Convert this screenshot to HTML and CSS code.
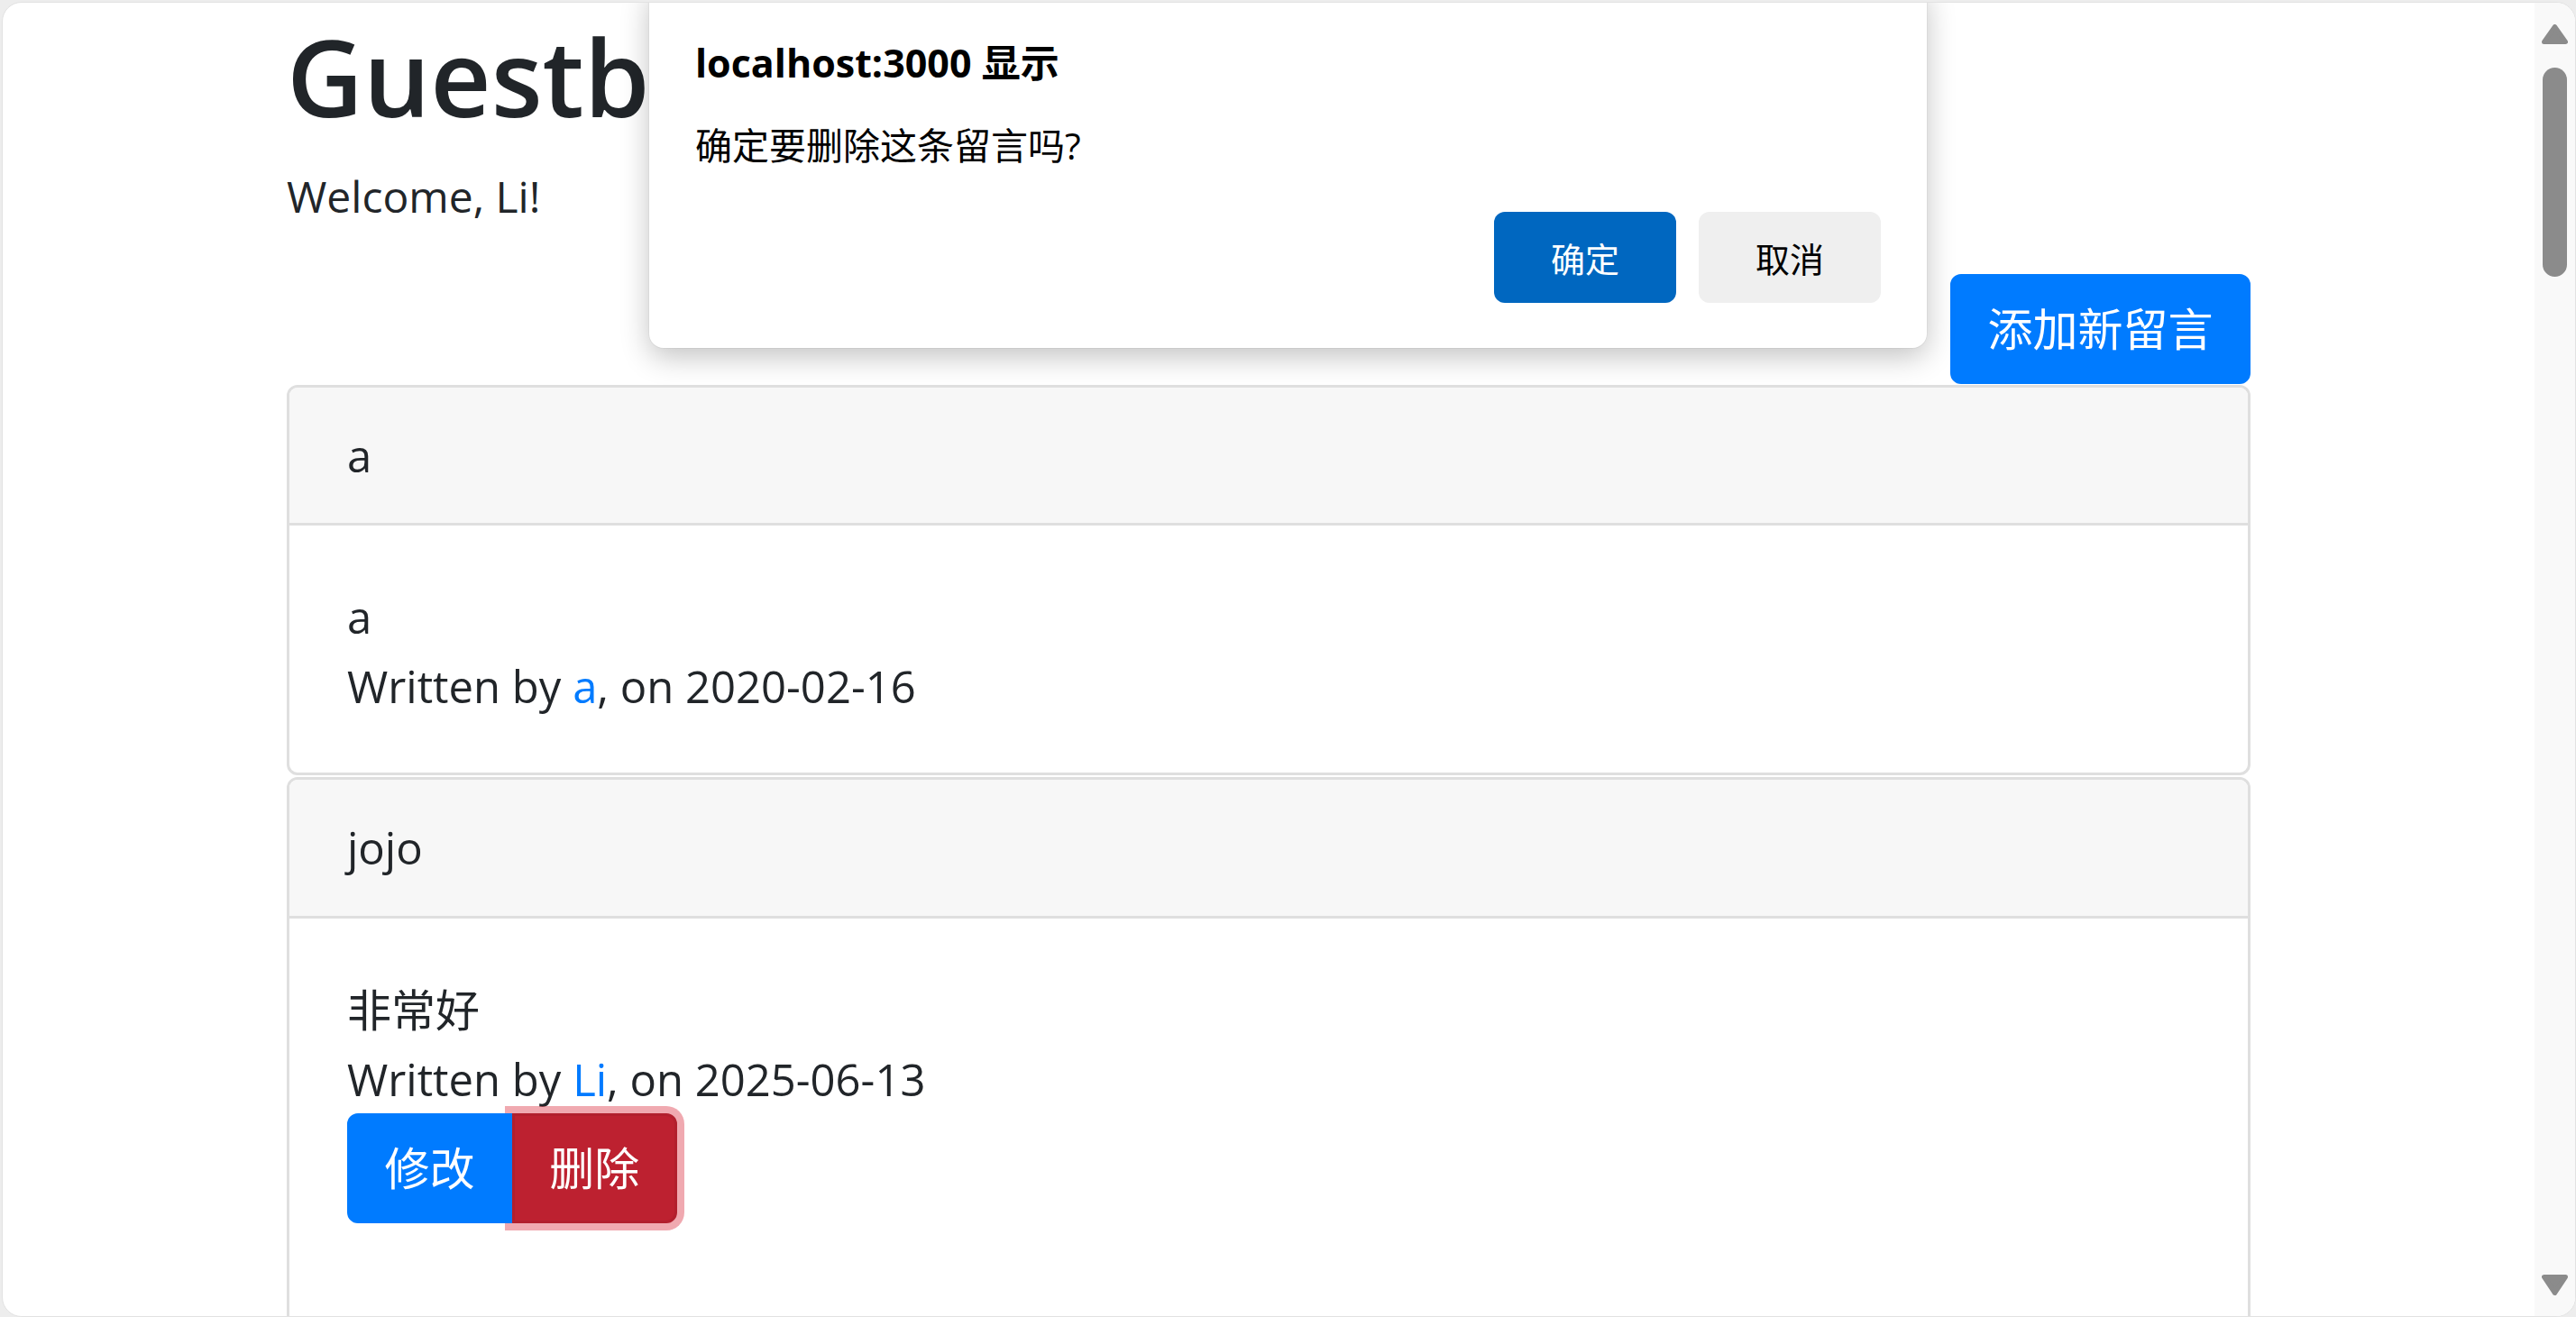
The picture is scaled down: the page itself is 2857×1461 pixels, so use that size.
FILE: index.html
```html
<!DOCTYPE html>
<html lang="zh-CN">
<head>
  <meta charset="UTF-8" />
  <meta name="viewport" content="width=device-width, initial-scale=1.0" />
  <title>Guestbook</title>
  <link rel="stylesheet" href="styles.css">
</head>
<body>
  <div class="window">
    <main class="page">
      <div class="container">
        <h1>Guestbook</h1>
        <p class="welcome">Welcome, Li!</p>
        <div class="actions">
          <a class="btn btn-primary" href="#">添加新留言</a>
        </div>

        <div class="card">
          <div class="card-header">a</div>
          <div class="card-body">
            <p>a</p>
            <p>Written by <a href="#">a</a>, on 2020-02-16</p>
          </div>
        </div>

        <div class="card">
          <div class="card-header">jojo</div>
          <div class="card-body">
            <p>非常好</p>
            <p>Written by <a href="#">Li</a>, on 2025-06-13</p>
            <div class="btn-group">
              <a class="btn btn-primary" href="#">修改</a>
              <button class="btn btn-danger">删除</button>
            </div>
          </div>
        </div>
      </div>
    </main>

    <div class="scrollbar">
      <svg class="arrow" width="29" height="22" viewBox="0 0 29 22">
        <path d="M14.5 2.5 L26.5 19.5 H2.5 Z" />
      </svg>
      <span class="thumb"></span>
      <span class="track-rest"></span>
      <svg class="arrow" width="29" height="23" viewBox="0 0 29 23">
        <path d="M2.5 2.5 H26.5 L14.5 20.5 Z" />
      </svg>
    </div>

    <div class="dialog">
      <div class="dialog-title">localhost:3000 显示</div>
      <div class="dialog-message">确定要删除这条留言吗?</div>
      <div class="dialog-buttons">
        <button class="dialog-btn ok">确定</button>
        <button class="dialog-btn cancel">取消</button>
      </div>
    </div>
  </div>
</body>
</html>
```

FILE: styles.css
```css
* {
  box-sizing: border-box;
}
html, body {
  height: 100%;
}
body {
  margin: 0;
  background: #ededed;
  font-family: "Open Sans", "Noto Sans CJK SC", sans-serif;
  color: #212529;
  overflow: hidden;
}
.window {
  position: relative;
  display: flex;
  height: calc(100vh - 2px);
  margin: 2px 0 0 2px;
  background: #fff;
  border: 1px solid #e2e2e2;
  border-radius: 22px;
  overflow: hidden;
}
.page {
  flex: 1;
  min-width: 0;
}
.container {
  width: 2178px;
  margin: 0 auto;
  font-size: 49px;
  line-height: 76.8px;
}
h1 {
  margin: 5px 0 18px;
  font-size: 117px;
  font-weight: 600;
  line-height: 153.6px;
}
.welcome {
  margin: 0 0 48px;
  font-size: 48px;
}
.actions {
  display: flex;
  justify-content: flex-end;
}
a {
  color: #007bff;
  text-decoration: none;
}
.btn {
  display: inline-block;
  padding: 19.2px 38.4px;
  font-family: inherit;
  font-size: 50px;
  line-height: 76.8px;
  color: #fff;
  border: 3px solid transparent;
  border-radius: 12px;
}
.btn-primary {
  background: #007bff;
  border-color: #007bff;
}
.btn-danger {
  background: #bd2130;
  border-color: #b21f2d;
  box-shadow: 0 0 0 8px rgba(225, 83, 97, 0.5);
}
.btn-group {
  display: inline-flex;
  margin-bottom: 80px;
}
.btn-group .btn:first-child {
  position: relative;
  z-index: 1;
  border-top-right-radius: 0;
  border-bottom-right-radius: 0;
}
.btn-group .btn:last-child {
  border-top-left-radius: 0;
  border-bottom-left-radius: 0;
}
.card {
  margin: 1px 0 2px;
  border: 3px solid #dfdfdf;
  border-radius: 12px;
  overflow: hidden;
}
.card-header {
  padding: 37px 64px;
  background: #f7f7f7;
  border-bottom: 3px solid #dfdfdf;
}
.card-body {
  padding: 63px 64px 57px;
}
.card-body p {
  margin: 0;
}

/* scrollbar column */
.scrollbar {
  width: 45px;
  display: flex;
  flex-direction: column;
  align-items: center;
  padding: 24px 0 23px;
  background: #f9f9f9;
}
.arrow path {
  fill: #8b8b8b;
  stroke: #8b8b8b;
  stroke-width: 5;
  stroke-linejoin: round;
}
.thumb {
  width: 27px;
  height: 232px;
  margin-top: 26px;
  background: #8b8b8b;
  border-radius: 14px;
}
.track-rest {
  flex: 1;
}

/* browser alert */
.dialog {
  position: absolute;
  left: 717px;
  top: -20px;
  width: 1417px;
  padding: 58px 51px 50px 51px;
  background: #fff;
  border-radius: 16px;
  box-shadow: 0 10px 32px rgba(0, 0, 0, 0.24), 0 0 0 1px rgba(0, 0, 0, 0.04);
  color: #000;
}
.dialog-title {
  font-size: 43px;
  font-weight: 700;
  line-height: 58px;
}
.dialog-message {
  margin-top: 36px;
  font-size: 41px;
  line-height: 52px;
}
.dialog-buttons {
  display: flex;
  justify-content: flex-end;
  gap: 25px;
  margin-top: 48px;
}
.dialog-btn {
  width: 202px;
  height: 101px;
  font-family: inherit;
  font-size: 38px;
  border: none;
  border-radius: 12px;
}
.dialog-btn.ok {
  background: #0067c0;
  color: #fff;
}
.dialog-btn.cancel {
  background: #efefef;
  color: #000;
}
```
